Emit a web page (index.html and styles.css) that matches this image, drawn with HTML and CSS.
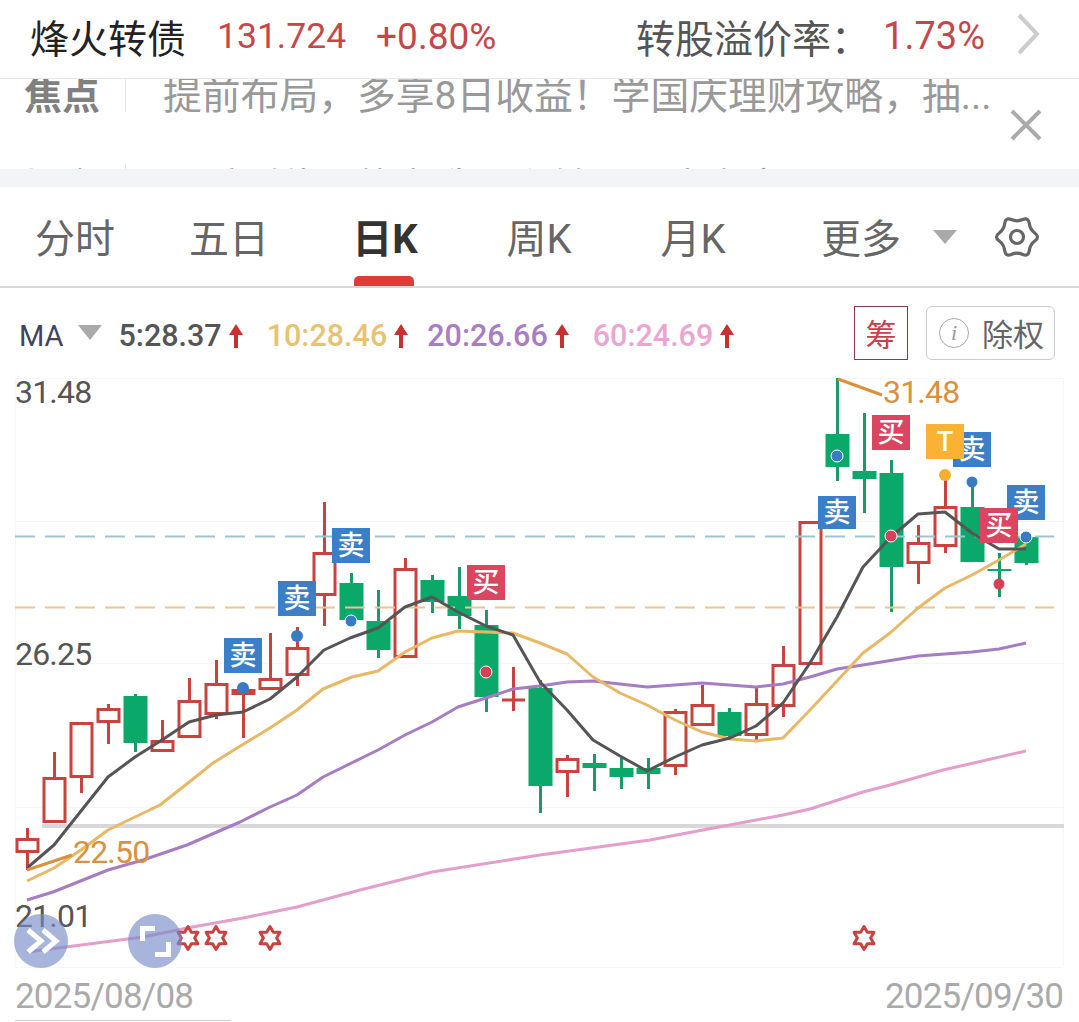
FILE: index.html
```html
<!DOCTYPE html>
<html lang="zh-CN">
<head>
    <meta charset="UTF-8">
    <meta name="viewport" content="width=device-width, initial-scale=1.0">
    <title>烽火转债</title>
    <link rel="stylesheet" href="styles.css">
</head>
<body>
    <!-- Quote bar -->
    <header class="quote">
        <span class="quote-name">烽火转债</span>
        <span class="quote-price">131.724</span>
        <span class="quote-pct">+0.80%</span>
        <span class="quote-label">转股溢价率：</span>
        <span class="quote-rate">1.73%</span>
        <svg class="quote-next" width="24" height="42" viewBox="0 0 24 42"><path d="M3 2L21 21L3 40"/></svg>
    </header>

    <!-- News ticker, second row is cut off by the band below -->
    <section class="news">
        <div class="news-row">
            <span class="news-tag">焦点</span>
            <span class="news-sep"></span>
            <span class="news-text">提前布局，多享8日收益！学国庆理财攻略，抽...</span>
        </div>
        <div class="news-row">
            <span class="news-tag">概念</span>
            <span class="news-sep"></span>
            <span class="news-text">一手到位：能力造股利转，一步专享</span>
        </div>
        <svg class="news-close" width="34" height="34" viewBox="0 0 34 34"><path d="M3 3L31 31M31 3L3 31"/></svg>
    </section>

    <div class="band"></div>

    <!-- Period tabs -->
    <nav class="tabs">
        <a class="tab tab-nudge">分时</a>
        <a class="tab tab-nudge">五日</a>
        <a class="tab active">日K</a>
        <a class="tab">周K</a>
        <a class="tab">月K</a>
        <a class="tab tab-more">更多</a>
        <span class="tab-caret"></span>
        <svg class="tab-gear" width="46" height="46" viewBox="-23 -23 46 46">
            <path d="M18 -3.75Q13 -7.5 12.25 -13.7Q11.5 -19.9 5.75 -17.45Q0 -15 -5.75 -17.45Q-11.5 -19.9 -12.25 -13.7Q-13 -7.5 -18 -3.75Q-23 0 -18 3.75Q-13 7.5 -12.25 13.7Q-11.5 19.9 -5.75 17.45Q0 15 5.75 17.45Q11.5 19.9 12.25 13.7Q13 7.5 18 3.75Q23 0 18 -3.75Z"/>
            <circle r="6.5"/>
        </svg>
    </nav>

    <!-- Moving averages -->
    <div class="ma-row">
        <span class="ma-name">MA</span>
        <span class="ma-caret"></span>
        <span class="ma-item ma5">5:28.37</span>
        <svg class="ma-arrow" width="16" height="24" viewBox="0 0 16 24"><path d="M8 24V8"/><polygon points="8,0 15,11 1,11"/></svg>
        <span class="ma-item ma10">10:28.46</span>
        <svg class="ma-arrow" width="16" height="24" viewBox="0 0 16 24"><path d="M8 24V8"/><polygon points="8,0 15,11 1,11"/></svg>
        <span class="ma-item ma20">20:26.66</span>
        <svg class="ma-arrow" width="16" height="24" viewBox="0 0 16 24"><path d="M8 24V8"/><polygon points="8,0 15,11 1,11"/></svg>
        <span class="ma-item ma60">60:24.69</span>
        <svg class="ma-arrow" width="16" height="24" viewBox="0 0 16 24"><path d="M8 24V8"/><polygon points="8,0 15,11 1,11"/></svg>
        <span class="chip-chou">筹</span>
        <span class="chip-fq"><i class="chip-info">i</i>除权</span>
    </div>

    <!-- Candle chart, viewBox keeps page coordinates -->
    <svg class="chart" width="1079" height="652" viewBox="0 370 1079 652">
        <defs>
            <polygon id="star" points="0,-11.5 3.32,-5.75 9.96,-5.75 6.64,0 9.96,5.75 3.32,5.75 0,11.5 -3.32,5.75 -9.96,5.75 -6.64,0 -9.96,-5.75 -3.32,-5.75"/>
        </defs>

        <path class="grid" d="M15 378.5H1063M15 521.5H1063M15 663.5H1063M15 807.5H1063M15 967.5H1063M15.5 378V967M1063.5 378V967"/>
        <path class="divider" d="M42 826H1064"/>

        <g class="up">
            <path d="M27.5 828V838M27.5 853V870"/><rect x="17" y="839.5" width="21" height="12"/>
            <path d="M54.5 752V777"/><rect x="44" y="778.5" width="21" height="43"/>
            <path d="M81.5 778V793"/><rect x="71" y="723.5" width="21" height="53"/>
            <path d="M108.5 704V708M108.5 723V744"/><rect x="98" y="709.5" width="21" height="12"/>
            <path d="M162.5 720V740"/><rect x="152" y="741.5" width="21" height="9"/>
            <path d="M189.5 678V700"/><rect x="179" y="701.5" width="21" height="35"/>
            <path d="M216.5 660V683M216.5 715V719"/><rect x="206" y="684.5" width="21" height="29"/>
            <path d="M243.5 695V738"/><rect x="233" y="690.5" width="21" height="3"/>
            <path d="M270.5 633V678"/><rect x="260" y="679.5" width="21" height="9"/>
            <path d="M297.5 627V647M297.5 676V686"/><rect x="287" y="648.5" width="21" height="26"/>
            <path d="M324.5 502V552M324.5 596V626"/><rect x="314" y="553.5" width="21" height="41"/>
            <path d="M405.5 558V568"/><rect x="395" y="569.5" width="21" height="87"/>
            <path d="M513.5 667V711M502 700H525"/>
            <path d="M567.5 755V758M567.5 773V797"/><rect x="557" y="759.5" width="21" height="12"/>
            <path d="M675.5 709V711M675.5 767V775"/><rect x="665" y="712.5" width="21" height="53"/>
            <path d="M702.5 685V704"/><rect x="692" y="705.5" width="21" height="19"/>
            <path d="M756.5 688V703M756.5 736V741"/><rect x="746" y="704.5" width="21" height="30"/>
            <path d="M783.5 646V664M783.5 707V717"/><rect x="773" y="665.5" width="21" height="40"/>
            <rect x="800" y="522.5" width="21" height="141"/>
            <path d="M918.5 525V542M918.5 564V584"/><rect x="908" y="543.5" width="21" height="19"/>
            <path d="M945.5 480V506M945.5 547V553"/><rect x="935" y="507.5" width="21" height="38"/>
        </g>

        <g class="down">
            <path d="M135.5 694V752"/><rect x="123.5" y="696" width="24" height="47"/>
            <path d="M351.5 573V583"/><rect x="339.5" y="583" width="24" height="37"/>
            <path d="M378.5 590V658"/><rect x="366.5" y="621" width="24" height="29"/>
            <path d="M432.5 575V613"/><rect x="420.5" y="580" width="24" height="22"/>
            <path d="M459.5 567V629"/><rect x="447.5" y="596" width="24" height="20"/>
            <path d="M486.5 610V712"/><rect x="474.5" y="625" width="24" height="72"/>
            <path d="M540.5 680V813"/><rect x="528.5" y="688" width="24" height="98"/>
            <path d="M594.5 754V791"/><rect x="582.5" y="763" width="24" height="5"/>
            <path d="M621.5 758V789"/><rect x="609.5" y="768" width="24" height="9"/>
            <path d="M648.5 758V789"/><rect x="636.5" y="768" width="24" height="6"/>
            <path d="M729.5 708V740"/><rect x="717.5" y="712" width="24" height="24"/>
            <path d="M837.5 378V481"/><rect x="825.5" y="434" width="24" height="33"/>
            <path d="M864.5 413V513"/><rect x="852.5" y="471" width="24" height="8"/>
            <path d="M891.5 460V612"/><rect x="879.5" y="473" width="24" height="94"/>
            <path d="M972.5 487V507"/><rect x="960.5" y="507" width="24" height="55"/>
            <path d="M999.5 553V597"/><rect x="987.5" y="569" width="24" height="2"/>
            <path d="M1026.5 537V565"/><rect x="1014.5" y="537" width="24" height="26"/>
        </g>

        <path class="dash dash-blue" d="M15 536.5H1054"/>
        <path class="dash dash-yellow" d="M15 607.5H1054"/>

        <polyline class="line line-ma60" points="27,952 143,937 187,928 243,918 297,907 360,890 432,872 540,855 650,840 703,830 783,815 810,809 863,792 890,785 943,770 1026,751"/>
        <polyline class="line line-ma20" points="27,900 53,892 108,870 143,860 187,845 240,822 270,807 297,795 323,777 378,750 405,735 432,722 458,707 486,698 513,689 540,686 567,682 593,681 620,684 647,687 702,683 756,687 783,684 810,677 837,669 863,665 918,656 972,652 999,649 1026,643"/>
        <polyline class="line line-ma10" points="27,881 54,868 81,850 108,830 160,805 188,783 213,763 242,745 270,728 297,710 323,689 352,677 378,671 405,652 432,638 458,631 486,632 513,633 540,643 567,654 593,677 620,693 647,705 675,720 702,732 730,739 756,741 783,738 810,710 837,681 863,653 890,633 918,608 945,588 972,575 999,560 1026,544"/>
        <polyline class="line line-ma5" points="27,868 54,845 81,811 108,777 135,757 162,740 189,722 216,715 243,712 270,699 297,677 324,650 350,638 378,628 405,607 432,597 458,612 486,626 513,635 540,682 567,710 593,740 620,756 647,771 675,757 702,745 730,738 756,726 783,703 810,663 837,617 863,567 891,537 918,514 945,512 972,533 999,549 1026,549"/>

        <circle class="dot dot-blue" cx="243" cy="688" r="6"/>
        <circle class="dot dot-blue" cx="297" cy="636" r="6"/>
        <circle class="dot dot-blue ring" cx="351" cy="621" r="6"/>
        <circle class="dot dot-red ring" cx="486" cy="672" r="6"/>
        <circle class="dot dot-blue ring" cx="837" cy="456" r="6"/>
        <circle class="dot dot-red ring" cx="891" cy="536" r="6"/>
        <circle class="dot dot-orange" cx="945" cy="475" r="6"/>
        <circle class="dot dot-blue" cx="972" cy="482" r="5.5"/>
        <circle class="dot dot-red" cx="999" cy="584" r="5.5"/>
        <circle class="dot dot-blue ring" cx="1026" cy="537" r="6"/>

        <!-- high / low markers -->
        <path class="mark-line" d="M838 379L882 395M27 870L72 855"/>
        <text class="mark-text" x="883" y="403">31.48</text>
        <text class="mark-text" x="73" y="863">22.50</text>

        <text class="axis" x="15" y="403">31.48</text>
        <text class="axis" x="15" y="665">26.25</text>
        <text class="axis" x="15" y="927">21.01</text>

        <!-- buy / sell flags -->
        <g class="flag flag-sell"><rect x="224" y="638" width="38" height="35"/><text x="243" y="665">卖</text></g>
        <g class="flag flag-sell"><rect x="278" y="581" width="38" height="35"/><text x="297" y="608">卖</text></g>
        <g class="flag flag-sell"><rect x="332" y="528" width="38" height="35"/><text x="351" y="555">卖</text></g>
        <g class="flag flag-buy"><rect x="467" y="565" width="38" height="35"/><text x="486" y="592">买</text></g>
        <g class="flag flag-sell"><rect x="818" y="496" width="38" height="33"/><text x="837" y="522">卖</text></g>
        <g class="flag flag-buy"><rect x="872" y="415" width="38" height="35"/><text x="891" y="442">买</text></g>
        <g class="flag flag-sell"><rect x="953" y="432" width="38" height="35"/><text x="972" y="459">卖</text></g>
        <g class="flag flag-t"><rect x="926" y="424" width="38" height="35"/><text x="945" y="451">T</text></g>
        <g class="flag flag-sell"><rect x="1007" y="485" width="38" height="35"/><text x="1026" y="512">卖</text></g>
        <g class="flag flag-buy"><rect x="980" y="508" width="38" height="35"/><text x="999" y="535">买</text></g>

        <use class="star" href="#star" x="188" y="938"/>
        <use class="star" href="#star" x="216" y="938"/>
        <use class="star" href="#star" x="270" y="938"/>
        <use class="star" href="#star" x="864" y="938"/>

        <!-- floating buttons -->
        <circle class="float-btn" cx="41" cy="941" r="27"/>
        <path class="float-icon" d="M28 930L41 941L28 952M43 930L56 941L43 952"/>
        <circle class="float-btn" cx="155" cy="941" r="27"/>
        <path class="float-icon" d="M155 928.5H142.5V941M155 954.5H168.5V942"/>

        <text class="date" x="15" y="1008">2025/08/08</text>
        <text class="date" x="885" y="1008">2025/09/30</text>
        <path class="date-line" d="M15 1020.5H231"/>
    </svg>
</body>
</html>
```

FILE: styles.css
```css
* {
    margin: 0;
    padding: 0;
    box-sizing: border-box;
}
html, body {
    height: 1022px;
    overflow: hidden;
}
body {
    background-color: white;
    font-family: Roboto, "Noto Sans CJK SC", sans-serif;
}

/* quote bar */
.quote {
    display: flex;
    align-items: center;
    height: 79px;
    padding: 0 0 6px 30px;
    border-bottom: 1px solid #e8e8e8;
}
.quote-name {
    font-size: 39px;
    color: #222;
}
.quote-price,
.quote-pct,
.quote-rate {
    color: #c4474a;
}
.quote-price {
    margin-left: 31px;
    font-size: 35.5px;
}
.quote-pct {
    margin-left: 30px;
    font-size: 37px;
}
.quote-label {
    margin-left: auto;
    font-size: 39px;
    color: #555;
}
.quote-rate {
    margin-left: 13px;
    font-size: 38px;
}
.quote-next {
    margin: -4px 39px 0 31px;
    fill: none;
    stroke: #ccc;
    stroke-width: 4;
}

/* news ticker */
.news {
    position: relative;
    height: 90px;
    overflow: hidden;
}
.news-row {
    display: flex;
    align-items: center;
    height: 90px;
    padding-left: 24px;
}
.news-row:first-child {
    margin-top: -32px;
}
.news-row + .news-row {
    margin-top: 2px;
}
.news-tag {
    font-size: 38px;
    font-weight: bold;
    color: #808080;
}
.news-sep {
    width: 1px;
    height: 40px;
    margin: 0 37px 0 25px;
    background-color: #e4e4e4;
}
.news-text {
    font-size: 38.8px;
    color: #999;
}
.news-close {
    position: absolute;
    top: 29px;
    right: 36px;
    fill: none;
    stroke: #aaa;
    stroke-width: 4;
}
.band {
    height: 18px;
    background-color: #f3f4f8;
}

/* period tabs */
.tabs {
    display: flex;
    align-items: center;
    height: 101px;
    border-bottom: 2px solid #d8d8d8;
}
.tab {
    position: relative;
    flex: 0 0 154px;
    height: 100%;
    padding-top: 20px;
    text-align: center;
    font-size: 40px;
    color: #666;
}
.tab-nudge {
    padding-right: 4px;
}
.tab.active {
    font-weight: bold;
    color: #333;
}
.tab.active::after {
    content: "";
    position: absolute;
    left: 46px;
    bottom: 0;
    width: 60px;
    height: 10px;
    border-radius: 5px 5px 0 0;
    background-color: #e03a3a;
}
.tab-more {
    flex: 0 0 auto;
    margin-left: 51px;
}
.tab-caret {
    margin-left: 32px;
    border-left: 12px solid transparent;
    border-right: 12px solid transparent;
    border-top: 14px solid #aaa;
}
.tab-gear {
    margin-left: auto;
    margin-right: 39px;
    fill: none;
    stroke: #666;
    stroke-width: 3.2;
}

/* moving averages */
.ma-row {
    display: flex;
    align-items: center;
    height: 82px;
    padding: 13px 24px 0 19px;
}
.ma-name {
    font-size: 29px;
    color: #3f4560;
}
.ma-caret {
    margin: -6px 17px 0 14px;
    border-left: 12px solid transparent;
    border-right: 12px solid transparent;
    border-top: 15px solid #aaa;
}
.ma-item {
    font-size: 30.5px;
    font-weight: 500;
    margin-right: 6px;
}
.ma5 { color: #555; }
.ma10 { color: #e8c272; }
.ma20 { color: #a97cc4; }
.ma60 { color: #eaa6d0; }
.ma-arrow {
    margin-right: 23px;
    fill: #c8302e;
    stroke: #c8302e;
    stroke-width: 0;
}
.ma-arrow path {
    stroke-width: 4;
}
.ma10 + .ma-arrow {
    margin-right: 18px;
}
.chip-chou {
    display: flex;
    align-items: center;
    justify-content: center;
    width: 54px;
    height: 54px;
    margin: -6px 18px 0 auto;
    border: 1px solid #8a3a4c;
    font-size: 31px;
    color: #c8404e;
}
.chip-fq {
    display: flex;
    align-items: center;
    width: 129px;
    height: 54px;
    margin-top: -6px;
    padding-left: 12px;
    border: 1px solid #ccc;
    border-radius: 6px;
    font-size: 31px;
    color: #666;
}
.chip-info {
    display: flex;
    align-items: center;
    justify-content: center;
    width: 30px;
    height: 30px;
    margin-right: 13px;
    border: 1px solid #aaa;
    border-radius: 50%;
    font-family: "Liberation Serif", serif;
    font-size: 22px;
    color: #999;
}

/* chart */
.chart {
    display: block;
}
.grid {
    fill: none;
    stroke: #f6f6f6;
    stroke-width: 1;
}
.divider {
    stroke: #d8d8d8;
    stroke-width: 4;
}
.up {
    fill: white;
    stroke: #c8423e;
    stroke-width: 3;
}
.down {
    fill: #0aa869;
    stroke: none;
}
.down path {
    fill: none;
    stroke: #1b9a68;
    stroke-width: 3;
}
.dash {
    fill: none;
    stroke-width: 2;
    stroke-dasharray: 20 10;
}
.dash-blue { stroke: #9dc3d4; }
.dash-yellow { stroke: #e8c690; }
.line {
    fill: none;
    stroke-width: 3;
    stroke-linejoin: round;
}
.line-ma5 { stroke: #555; }
.line-ma10 { stroke: #e8b866; }
.line-ma20 { stroke: #a67cc2; }
.line-ma60 { stroke: #e39ecb; }
.dot-blue { fill: #3a7cc4; }
.dot-red { fill: #d8405a; }
.dot-orange { fill: #f5b030; }
.ring {
    stroke: white;
    stroke-width: 1;
}
.mark-line {
    fill: none;
    stroke: #d9913e;
    stroke-width: 3;
}
.mark-text {
    font-size: 32px;
    letter-spacing: -0.8px;
    fill: #d9913e;
}
.axis {
    font-size: 32px;
    letter-spacing: -0.8px;
    fill: #555;
}
.flag text {
    font-size: 27px;
    font-weight: 500;
    text-anchor: middle;
    fill: white;
}
.flag-sell rect { fill: #3a7fc8; }
.flag-buy rect { fill: #dc4560; }
.flag-t rect { fill: #f9b233; }
.star {
    fill: white;
    stroke: #c8423e;
    stroke-width: 3;
    stroke-linejoin: round;
}
.float-btn {
    fill: rgba(120, 140, 200, 0.65);
}
.float-icon {
    fill: none;
    stroke: white;
    stroke-width: 5;
}
.date {
    font-size: 35px;
    letter-spacing: -0.8px;
    fill: #aaa;
}
.date-line {
    fill: none;
    stroke: #ccc;
    stroke-width: 1;
}
```
